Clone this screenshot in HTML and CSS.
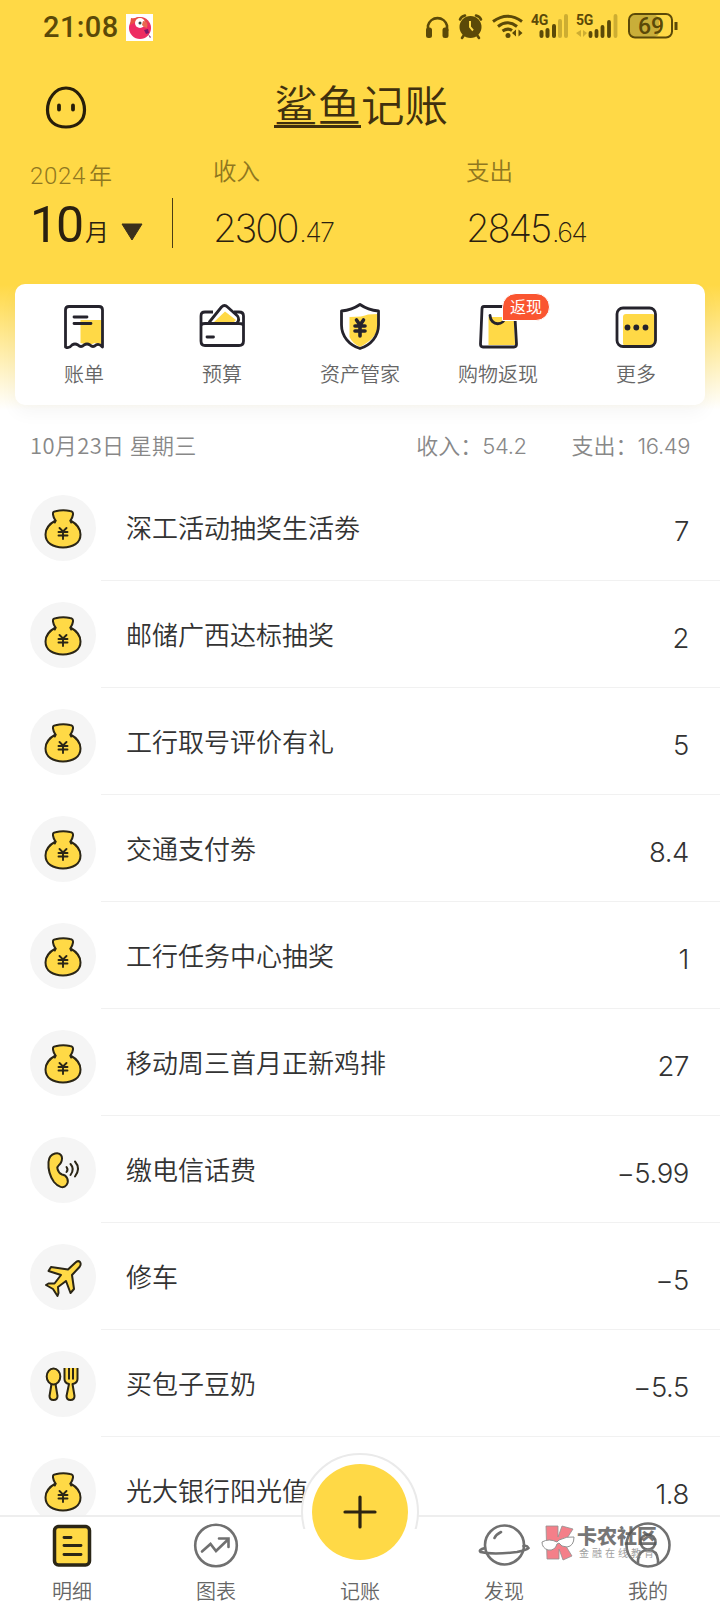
FILE: index.html
```html
<!DOCTYPE html>
<html lang="zh-CN">
<head>
<meta charset="utf-8">
<title>鲨鱼记账</title>
<link rel="stylesheet" href="styles.css">
</head>
<body>
<svg class="defs" width="0" height="0">
  <symbol id="bag" viewBox="0 0 66 66">
    <path d="M23 19.500Q22.500 16.500 25.500 16.200Q33 14.500 40 16Q43.500 16.500 43 19.500Q42.500 23 40.500 25.500Q50.500 31 50.500 39.500C50.500 48 43 52.500 33 52.500C23 52.500 15.500 48 15.500 39.500Q15.500 31 25.500 25.500Q23.500 23 23 19.500Z" fill="#ffd946" stroke="#2b2616" stroke-width="2" stroke-linejoin="round"/>
    <path d="M24.800 27.500Q25.700 26.500 25.500 25.500M41.200 27.500Q40.300 26.500 40.500 25.500M29.500 33L33 36.500L36.500 33M28.500 37H37.500M28.500 40.500H37.500M33 36.500V44" fill="none" stroke="#2b2616" stroke-width="1.900" stroke-linecap="round"/>
  </symbol>
</svg>
<div class="app">
  <header class="head">
    <div class="status">
      <span class="clock">21:08</span>
      <svg class="parrot" width="27" height="27" viewBox="0 0 27 27"><path fill="#fff" d="M0 0h27v27H0z"/><circle cx="14" cy="14" r="11" fill="#ee2c62"/><path d="M5 4Q8 5 12 3Q21 2 25 13Q22 6 14 6L4 11Z" fill="#e94f45"/><circle cx="14" cy="9" r="5" fill="#fff"/><circle cx="14" cy="9" r="1.500" fill="#344"/><path d="M17 7Q23 7 21 14Q18 14 16 11Z" fill="#e96a50"/><path d="M18 16l4-1 1 4-3 1ZM22 20l3 3-1 1Z" fill="#7d1669"/></svg>
      <div class="sys">
        <svg width="263" height="30" viewBox="0 0 263 30" fill="none" stroke="#5b4908">
          <g><path d="M4 19V13.500A9.800 9.800 0 0 1 23 13.500V19" stroke-width="2.600"/><rect x="2" y="15.500" width="6" height="10.500" rx="2.500" fill="#5b4908" stroke="none"/><rect x="18.500" y="15.500" width="6" height="10.500" rx="2.500" fill="#5b4908" stroke="none"/></g>
          <g><circle cx="46.500" cy="15" r="11" fill="#5b4908" stroke="none"/><path d="M36 7.500Q37 4.500 41 3.500M57 7.500Q56 4.500 52 3.500M40 23L38 26M53 23L55 26" stroke-width="2.600" stroke-linecap="round"/><path d="M46 9V15L49 18.500" stroke="#ffd946" stroke-width="2"/></g>
          <g stroke-width="3"><path d="M69 9.500Q83.500-1 98 9.500M74 14.500Q83.500 7 93 14.500M78.500 19Q84 15.500 88 18.500"/></g><circle cx="84" cy="23.500" r="2.500" fill="#5b4908" stroke="none"/><path d="M92 17.500V24.500L88 21ZM94.500 17.500V24.500L98.500 21Z" fill="#5b4908" stroke="none"/>
          <g stroke-width="4" stroke-linecap="round"><path d="M117.500 20V24M123.500 18V24M130 14V24"/><path d="M136 9V24M142 4V24" opacity=".3"/></g>
          <path d="M157 18V25L152 21ZM159 18V25L163 21Z" fill="#5b4908" stroke="none" opacity=".3"/>
          <g stroke-width="3.800" stroke-linecap="round"><path d="M166.500 21V24M172.500 19V24M178.500 15V24M185 10V24"/><path d="M191.500 4V24" opacity=".3"/></g>
          <rect x="206" y="3" width="29" height="22" rx="5" fill="#c9ae39" stroke="none"/><rect x="205" y="2" width="43" height="23.500" rx="6" stroke-width="2"/><path d="M252 10V18" stroke-width="3"/>
        </svg>
        <b class="net net-a">4G</b><b class="net net-b">5G</b><span class="power">69</span>
      </div>
    </div>
    <div class="titlebar">
      <svg class="face" width="42" height="44" viewBox="0 0 42 44" fill="none" stroke="#271e0a"><path d="M21 2C32 2 39.500 13 39.500 24C39.500 35 32 41 21 41S2.500 35 2.500 24C2.500 13 10 2 21 2Z" stroke-width="3.200"/><path d="M14 19.500V23.500M28 19.500V23.500" stroke-width="3.800" stroke-linecap="round"/></svg>
      <h1 class="logo"><span class="shark">鲨鱼</span>记账</h1>
    </div>
    <div class="summary">
      <div class="month">
        <div class="year">2024<i>年</i></div>
        <div class="pick"><span class="num">10</span><span class="unit">月</span><svg width="22" height="18" viewBox="0 0 22 18"><path d="M1 1H21L11 17Z" fill="#3a301c" stroke="#3a301c" stroke-linejoin="round"/></svg></div>
      </div>
      <div class="total income"><div class="cap">收入</div><div class="sum">2300<small>.47</small></div></div>
      <div class="total"><div class="cap">支出</div><div class="sum">2845<small>.64</small></div></div>
    </div>
    <nav class="card">
      <a class="tool"><svg width="50" height="50" viewBox="0 0 50 50"><path d="M21.500 20H43V44L36 43L30 45L21.500 43Z" fill="#ffd946"/><path d="M6.500 47V10Q6.500 6.500 10 6.500H40Q43.500 6.500 43.500 10V47Q40 43 37 45Q34 48 31 45Q28 43 25 45Q22 48 19 45Q16 43 13 45Q10 49 6.500 47Z" fill="none" stroke="#25232c" stroke-width="2.800" stroke-linejoin="round"/><path d="M15 17H28M15 23.500H32" stroke="#25232c" stroke-width="2.800" stroke-linecap="round"/></svg>账单</a>
      <a class="tool"><svg width="50" height="50" viewBox="0 0 50 50" fill="none" stroke="#25232c" stroke-width="2.800" stroke-linejoin="round"><path d="M16 12H8Q4 12 4 16V41Q4 45.500 8 45.500H42Q46.500 45.500 46.500 41V16Q46.500 12 42 12H37M4 26Q4 23.500 8 23.500H42Q46.500 23.500 46.500 26M12 22.500L24.500 7Q27.500 4 30.500 7L40.500 16Q43 19.500 40 23"/><path d="M17 22L28 11.500L39 20L37 22Z" fill="#ffd946" stroke="none"/><path d="M10 37H16.500" stroke-linecap="round"/></svg>预算</a>
      <a class="tool"><svg width="50" height="50" viewBox="0 0 50 50" fill="none" stroke="#25232c"><path d="M14.500 17Q28 17 33 14.500L43 14V26Q42 38 25 47Q17 43 14.500 37Z" fill="#ffd946" stroke="none"/><path d="M25 4.500Q33 10 43.500 11V25C43.500 36 36 45 25 48.500C14 45 6.500 36 6.500 25V11Q17 10 25 4.500Z" stroke-width="2.800" stroke-linejoin="round"/><path d="M21.500 20L25 25L28.500 20M20 26H30M20 31H30M25 25V36" stroke-width="3.600" stroke-linecap="round"/></svg>资产管家</a>
      <a class="tool"><svg width="50" height="50" viewBox="0 0 50 50" fill="none" stroke="#25232c" stroke-width="2.800"><path d="M15.500 17H41L42 45H15.500Z" fill="#ffd946" stroke="none"/><path d="M11 6.500H39Q41.500 6.500 41.500 9L43.500 44Q43.500 47 41 47H10Q7.500 47 7.500 44L9 9Q9 6.500 11 6.500Z"/><path d="M17 15.500C18 26.500 31 26.500 33 15.500" stroke-linecap="round"/></svg><span class="badge">返现</span>购物返现</a>
      <a class="tool"><svg width="50" height="50" viewBox="0 0 50 50"><rect x="12" y="14" width="32" height="32" rx="3" fill="#ffd946"/><rect x="6" y="8" width="38.500" height="38.500" rx="6" fill="none" stroke="#25232c" stroke-width="2.800"/><g fill="#25232c"><circle cx="16.500" cy="27.500" r="2.900"/><circle cx="25.300" cy="27.500" r="2.900"/><circle cx="34.500" cy="27.500" r="2.900"/></g></svg>更多</a>
    </nav>
  </header>
  <main class="list">
    <div class="day"><span class="date">10月23日 星期三</span><span class="stat">收入：<em>54.2</em></span><span class="stat">支出：<em>16.49</em></span></div>
    <div class="row"><svg class="ico"><use href="#bag"/></svg><div class="line"><span>深工活动抽奖生活劵</span><b>7</b></div></div>
    <div class="row"><svg class="ico"><use href="#bag"/></svg><div class="line"><span>邮储广西达标抽奖</span><b>2</b></div></div>
    <div class="row"><svg class="ico"><use href="#bag"/></svg><div class="line"><span>工行取号评价有礼</span><b>5</b></div></div>
    <div class="row"><svg class="ico"><use href="#bag"/></svg><div class="line"><span>交通支付劵</span><b>8.4</b></div></div>
    <div class="row"><svg class="ico"><use href="#bag"/></svg><div class="line"><span>工行任务中心抽奖</span><b>1</b></div></div>
    <div class="row"><svg class="ico"><use href="#bag"/></svg><div class="line"><span>移动周三首月正新鸡排</span><b>27</b></div></div>
    <div class="row"><svg class="ico" viewBox="0 0 66 66" fill="none" stroke="#2b2616" stroke-width="2" stroke-linecap="round"><path d="M25 16.500C31 15 33.500 20 31 25.500C29.500 29 26.500 28 27.500 32Q28.500 36 32 37.500C37 38 39.500 44 36.500 48C33.500 52 28 50 24 45C19 38 18 32 18.500 25Q19 18 25 16.500Z" fill="#ffd946"/><path d="M36.500 30Q38.500 32.500 36.500 35M40.500 27Q45 32 40.500 38M45 24.500Q51 31.500 45 39.500"/></svg><div class="line"><span>缴电信话费</span><b>−5.99</b></div></div>
    <div class="row"><svg class="ico" viewBox="0 0 66 66"><path d="M38 25.500L45.500 18.500Q48 16 50 18Q51.500 20 49.500 23L42 31L44 45L40.500 49L36 37L28 43L28.500 49L27.500 52L23 45L16 41L18.500 39.500L24.500 39.500L31 31L18.500 27L21 23Z" fill="#ffd946" stroke="#2b2616" stroke-width="2" stroke-linejoin="round"/></svg><div class="line"><span>修车</span><b>−5</b></div></div>
    <div class="row"><svg class="ico" viewBox="0 0 66 66" fill="#ffd946" stroke="#2b2616" stroke-width="2" stroke-linejoin="round"><path d="M21.500 33H25.500L27.500 45Q27.500 49 23.500 49Q19.500 49 19.500 45Z"/><ellipse cx="23.500" cy="25.500" rx="6.800" ry="8"/><path d="M34.500 17V28Q34.500 32 39 33L36.500 45Q36.500 49 40.500 49Q44.500 49 44.500 45L42.500 33Q47.500 32 47.500 28V17M39 17V28.500M43 17V28.500"/></svg><div class="line"><span>买包子豆奶</span><b>−5.5</b></div></div>
    <div class="row"><svg class="ico"><use href="#bag"/></svg><div class="line"><span>光大银行阳光值</span><b>1.8</b></div></div>
  </main>
  <footer class="tabs">
    <a class="tab"><svg width="50" height="50" viewBox="0 0 50 50"><rect x="7.500" y="6.500" width="35" height="38.500" rx="4" fill="#ffd946" stroke="#2b2616" stroke-width="3.500"/><path d="M17 17.500H24M17 25.500H34M17 34.500H34" stroke="#2b2616" stroke-width="2.900" stroke-linecap="round"/></svg>明细</a>
    <a class="tab"><svg width="50" height="50" viewBox="0 0 50 50" fill="none" stroke="#707070" stroke-width="2.600"><circle cx="25" cy="25.500" r="20.800"/><path d="M11 31.500L19.500 24L25 31L37 19.500M28 18.500H37.500V27" stroke-linecap="round"/></svg>图表</a>
    <a class="tab"><span class="hump"></span><span class="plus"><svg width="34" height="34" viewBox="0 0 34 34"><path d="M17 2V32M2 17H32" stroke="#2d2412" stroke-width="3.200" stroke-linecap="round"/></svg></span><span class="room"></span>记账</a>
    <a class="tab"><svg width="54" height="50" viewBox="0 0 54 50" fill="none" stroke="#707070" stroke-width="2.600" stroke-linecap="round"><circle cx="27.500" cy="25" r="19.500"/><path d="M17.500 18Q19 14.500 24 12M8 28Q1 30 3.500 32Q16 35 40 32Q50 30 51.500 28Q50 25 46.500 26"/></svg>发现</a>
    <a class="tab"><svg width="50" height="50" viewBox="0 0 50 50" fill="none" stroke="#707070" stroke-width="2.600"><circle cx="25" cy="25" r="21.500"/><circle cx="25" cy="22" r="7.500"/><path d="M15 43V40Q16 30 25 30Q34 30 35 40V43"/></svg>我的</a>
    <div class="mark">
      <svg width="34" height="36" viewBox="0 0 34 36"><path d="M5 1H17V12L21 1L32 4L23 18L31 31L22 35L18 24V34H6Z" fill="#f2606c" stroke="#777" stroke-width=".8"/><path d="M1 17Q8 13 16 17L18 15Q26 11 33 12Q33 21 26 22Q20 22 18 18L16 19Q14 26 7 25Q1 23 1 17Z" fill="#fff" stroke="#777"/></svg>
      <div><strong>卡农社区</strong><span>金融在线教育</span></div>
    </div>
  </footer>
</div>
</body>
</html>
```

FILE: styles.css
```css
* { box-sizing: border-box; }
body { margin: 0; background: #fff; font-family: "Noto Sans CJK SC", sans-serif; }
.defs { display: block; }
.app { width: 720px; height: 1612px; overflow: hidden; display: flex; flex-direction: column; position: relative; }
.head { flex: none; height: 415px; padding: 0 15px; background: linear-gradient(#ffd946 0 285px, #fff 410px); }
.status { height: 54px; padding-left: 28px; display: flex; align-items: center; }
.clock { width: 83px; font: 500 29px/56px Roboto, sans-serif; letter-spacing: .4px; color: #5b4908; }
.sys { position: relative; width: 263px; height: 30px; margin-left: 271px; }
.sys svg { display: block; }
.net { position: absolute; top: 1px; font: 700 14px/14px Roboto, sans-serif; color: #5b4908; letter-spacing: -.4px; }
.net-a { left: 107px; }
.net-b { left: 152px; }
.power { position: absolute; left: 214px; top: 3px; font: 500 23px/23px Roboto, sans-serif; color: #5b4908; }
.titlebar { height: 104px; padding: 32px 0 0 30px; display: flex; align-items: flex-start; }
.logo { margin: -4px 0 0 187px; font-weight: 350; font-size: 43.500px; line-height: 44px; color: #40300e; display: flex; }
.shark { height: 46px; border-bottom: 3px solid #40300e; }
.summary { height: 126px; padding-left: 15px; display: flex; }
.month { flex: none; width: 143px; }
.year { height: 34px; font: 300 24px/32px Roboto, sans-serif; color: #8f7720; letter-spacing: .7px; white-space: nowrap; }
.year i { font: 350 23px/32px "Noto Sans CJK SC", sans-serif; margin-left: 3px; }
.pick { height: 50px; margin-top: 6px; border-right: 1px solid #4b3d14; display: flex; align-items: flex-end; color: #2a2010; }
.num { font: 400 50px/46px Roboto, sans-serif; width: 55px; letter-spacing: -2px; }
.unit { font-size: 24px; line-height: 34px; font-weight: 350; }
.pick svg { margin: 0 0 7px 12px; }
.total { width: 253px; flex: none; }
.income { margin-left: 40px; }
.cap { font-size: 23.500px; line-height: 24px; color: #8f7720; font-weight: 350; }
.sum { margin-top: 23px; font: 250 38.500px/46px Inter, sans-serif; letter-spacing: -2.200px; color: #2a2010; }
.sum small { font-size: 27px; letter-spacing: -1.600px; margin-left: 2px; }
.card { height: 121px; border-radius: 10px; background: #fff; box-shadow: 0 8px 18px rgba(0,0,0,.04); display: flex; }
.tool { position: relative; width: 138px; display: flex; flex-direction: column; align-items: center; padding-top: 16px; font-size: 20px; line-height: 48px; color: #666; font-weight: 350; }
.badge { position: absolute; left: 73px; top: 9px; width: 48px; height: 28px; border: 1px solid #fff; border-radius: 14px 14px 14px 0; background: #fa5530; color: #fff; font-size: 16px; line-height: 25px; font-weight: 400; text-align: center; }
.list { flex: none; }
.day { height: 59px; padding: 0 30px; display: flex; align-items: center; font-size: 22px; line-height: 30px; font-weight: 350; color: #888; }
.date { flex: 1; margin-top: -1px; letter-spacing: .35px; }
.stat { margin-left: 45px; }
.stat em { font: 300 22px/30px Inter, sans-serif; letter-spacing: -.4px; }
.row { height: 107px; padding-left: 30px; display: flex; align-items: center; }
.ico { width: 66px; height: 66px; border-radius: 50%; background: #f5f5f5; flex: none; }
.line { flex: 1; height: 107px; margin-left: 5px; padding: 0 31px 0 25px; border-bottom: 1px solid #f1f1f1; display: flex; justify-content: space-between; align-items: center; font-size: 26px; font-weight: 350; color: #333; }
.line span { padding-bottom: 2px; }
.line b { font: 300 27.500px/32px Inter, sans-serif; letter-spacing: -.4px; padding-top: 7px; }
.tabs { position: absolute; left: 0; bottom: 0; width: 720px; height: 97px; border-top: 2px solid #eee; background: #fff; display: flex; }
.tab { position: relative; width: 144px; padding-top: 3px; display: flex; flex-direction: column; align-items: center; font-size: 20px; line-height: 42px; font-weight: 350; color: #666; }
.hump { position: absolute; top: -64px; left: 13px; width: 118px; height: 118px; border-radius: 50%; border: 2px solid #eaeaea; background: #fff; clip-path: inset(0 0 42px 0); }
.plus { position: absolute; top: -53px; left: 24px; width: 96px; height: 96px; border-radius: 50%; background: #ffd946; display: flex; align-items: center; justify-content: center; }
.room { height: 50px; }
.mark { position: absolute; left: 541px; top: 8px; display: flex; gap: 2px; opacity: .8; color: #555; }
.mark strong { display: block; font-size: 20px; line-height: 22px; font-weight: 900; }
.mark span { display: block; font-size: 10px; line-height: 11px; letter-spacing: 3px; padding-left: 2px; color: #888; }
```
